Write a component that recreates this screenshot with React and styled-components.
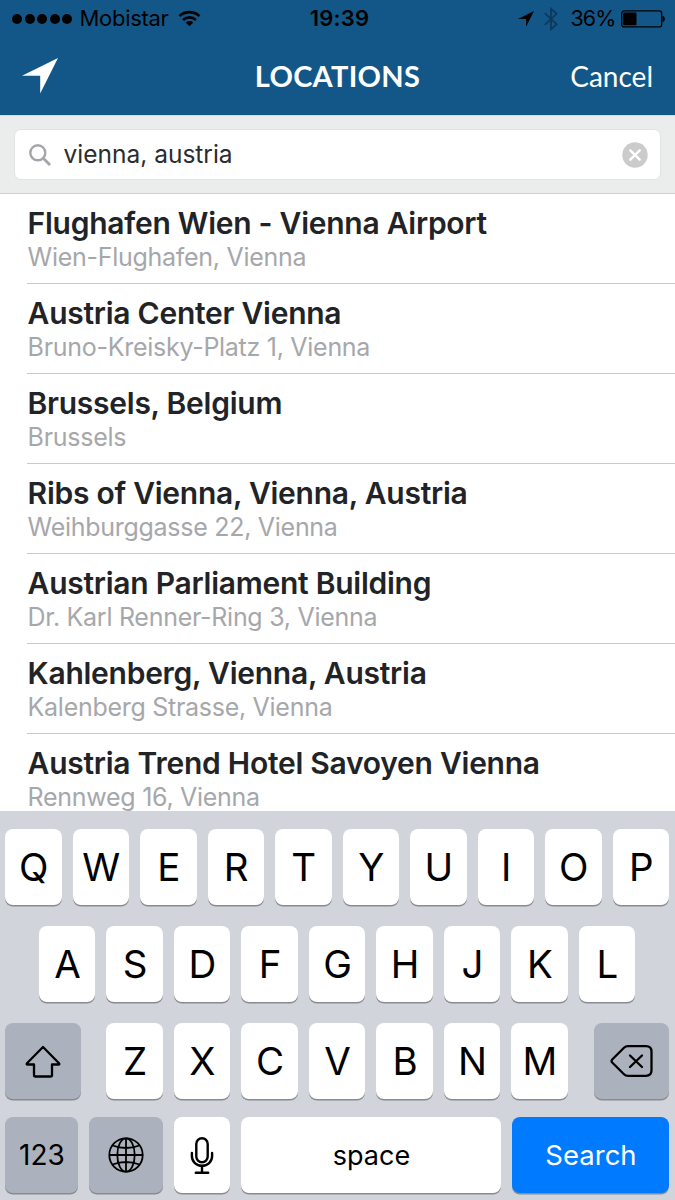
import React from "react";
import styled, { createGlobalStyle } from "styled-components";

const GlobalStyle = createGlobalStyle`
  * {
    box-sizing: border-box;
  }

  body {
    margin: 0;
    background: #fff;
    font-family: Inter, "Liberation Sans", sans-serif;
  }
`;

const Screen = styled.div`
  width: 675px;
  height: 1200px;
  display: flex;
  flex-direction: column;
  overflow: hidden;
`;

const Header = styled.header`
  flex: none;
  height: 115px;
  background: #135788;
`;

const StatusBar = styled.div`
  height: 37px;
  padding: 0 10px 0 12px;
  display: grid;
  grid-template-columns: 1fr auto 1fr;
  align-items: center;
  font-size: 22px;
  line-height: 37px;
  color: #000;
`;

const StatusGroup = styled.div`
  height: 37px;
  display: flex;
  align-items: center;
  justify-content: ${({ $end }) => ($end ? "flex-end" : "flex-start")};
`;

const Signal = styled.div`
  display: flex;
  gap: 2.5px;
  margin-right: 7.5px;

  i {
    width: 10px;
    height: 10px;
    border-radius: 50%;
    background: #000;
  }
`;

const Carrier = styled.span`
  letter-spacing: -0.3px;
  margin-right: 9px;
`;

const Clock = styled.span`
  padding-left: 2px;
  font-weight: 600;
  letter-spacing: 0.2px;
`;

const Percent = styled.span`
  font-size: 21.5px;
  letter-spacing: -0.9px;
  margin: 0 5.5px 0 12px;
`;

const NavBar = styled.div`
  height: 78px;
  padding: 0 22px;
  display: grid;
  grid-template-columns: 1fr auto 1fr;
  align-items: center;
  color: #fff;
  font-family: Lato, "Open Sans", sans-serif;
`;

const NavTitle = styled.h1`
  margin: 0;
  font-size: 29px;
  line-height: 76px;
  font-weight: 700;
  letter-spacing: 0.3px;
`;

const Cancel = styled.button`
  justify-self: end;
  padding: 0;
  border: 0;
  background: none;
  color: #fff;
  font: 400 28px/76px Lato, "Open Sans", sans-serif;
`;

const SearchBar = styled.div`
  flex: none;
  height: 79px;
  padding: 13px 14px;
  background: #ebeded;
  border-top: 1px solid #d3dde5;
  border-bottom: 1px solid #cfd1d1;
`;

const SearchField = styled.div`
  height: 51px;
  padding: 0 12px 0 14px;
  display: flex;
  align-items: center;
  background: #fff;
  border: 1px solid #e2e4e4;
  border-radius: 7px;
`;

const Query = styled.span`
  flex: 1;
  margin-left: 12.5px;
  font-size: 24.5px;
  line-height: 47px;
  color: #2b2c30;
`;

const Results = styled.ul`
  flex: none;
  height: 617px;
  margin: 0;
  padding: 0 0 0 27px;
  overflow: hidden;
  list-style: none;
`;

const Result = styled.li`
  height: 90px;
  padding: 11px 0 0 0.6px;
  border-bottom: 1px solid #c9cacc;
  white-space: nowrap;
`;

const Place = styled.div`
  font-size: 30px;
  line-height: 37px;
  font-weight: 600;
  letter-spacing: -0.26px;
  color: #222327;
`;

const Address = styled.div`
  font-size: 25px;
  line-height: 31px;
  letter-spacing: -0.28px;
  color: #a6a7ab;
`;

const Keyboard = styled.div`
  flex: none;
  height: 389px;
  padding: 18px 6px 0 5px;
  display: flex;
  flex-direction: column;
  gap: 21.5px;
  background: #d1d4da;
`;

const KeyRow = styled.div`
  display: flex;
  justify-content: ${({ $spread }) => ($spread ? "space-between" : "center")};
  gap: 11px;
  margin-top: ${({ $lift }) => $lift || 0}px;
`;

const Letters = styled.div`
  display: flex;
  gap: 11px;
`;

const Key = styled.div`
  flex: none;
  width: ${({ $width }) => $width || 56.5}px;
  height: 75.5px;
  padding: ${({ $tone }) => ($tone === "blue" ? 0 : 1)}px 0 0 1px;
  display: flex;
  align-items: center;
  justify-content: center;
  border-radius: 8px;
  background: ${({ $tone }) =>
    ({ dark: "#abb2bd", blue: "#007aff" })[$tone] || "#fff"};
  color: ${({ $tone }) => ($tone === "blue" ? "#fff" : "#000")};
  box-shadow: 0 1.5px 0 #888b90;
  font-size: ${({ $size }) => $size || 38.5}px;
  font-weight: 400;
`;

const places = [
  ["Flughafen Wien - Vienna Airport", "Wien-Flughafen, Vienna"],
  ["Austria Center Vienna", "Bruno-Kreisky-Platz 1, Vienna"],
  ["Brussels, Belgium", "Brussels"],
  ["Ribs of Vienna, Vienna, Austria", "Weihburggasse 22, Vienna"],
  ["Austrian Parliament Building", "Dr. Karl Renner-Ring 3, Vienna"],
  ["Kahlenberg, Vienna, Austria", "Kalenberg Strasse, Vienna"],
  ["Austria Trend Hotel Savoyen Vienna", "Rennweg 16, Vienna"],
];

const WifiIcon = () => (
  <svg width="23" height="17" viewBox="0 0 22 17" fill="none" stroke="#000" strokeWidth="2.6">
    <path d="M1 6.2a14.2 14.2 0 0 1 20 0" />
    <path d="M4.6 10a9.2 9.2 0 0 1 12.8 0" />
    <path d="M11 16.2 7.2 12.4a5.6 5.6 0 0 1 7.6 0z" fill="#000" stroke="none" />
  </svg>
);

const ArrowIcon = ({ size, color }) => (
  <svg width={size} height={size} viewBox="0 0 36 36" fill={color}>
    <path d="M36 0 18.2 35.5V17.8H0z" />
  </svg>
);

const BluetoothSvg = styled.svg`
  margin-left: 10px;
`;

const BluetoothIcon = () => (
  <BluetoothSvg width="14" height="24" viewBox="0 0 14 24" fill="none" stroke="#0c395b" strokeWidth="1.8">
    <path d="M.8 6.2 12.6 17.2 7 22.3V1.7l5.6 5.1L.8 17.8" />
  </BluetoothSvg>
);

const BatteryIcon = () => (
  <svg width="44" height="18" viewBox="0 0 44 18">
    <rect x=".7" y=".9" width="40" height="16" rx="2.5" fill="none" stroke="#000" strokeWidth="1.3" />
    <rect x="2.2" y="2.5" width="13.3" height="12.8" rx="1" />
    <path d="M41.5 5.7c1.5.3 2.3 1.5 2.3 3.2s-.8 2.900-2.300 3.200z" />
  </svg>
);

const SearchIcon = () => (
  <svg width="22" height="22" viewBox="0 0 22 22" fill="none" stroke="#a4a5aa" strokeWidth="2.4">
    <circle cx="8.8" cy="8.8" r="7.5" />
    <path d="m14 14 7 7" strokeWidth="2.8" />
  </svg>
);

const ClearIcon = () => (
  <svg width="26" height="26" viewBox="0 0 26 26">
    <circle cx="13" cy="13" r="12.7" fill="#cbcbcb" />
    <path d="m8.3 8.3 9.4 9.4m0-9.4-9.4 9.4" stroke="#fff" strokeWidth="2.4" strokeLinecap="round" />
  </svg>
);

const ShiftIcon = () => (
  <svg width="36" height="33" viewBox="0 0 36 33" fill="none" stroke="#000" strokeWidth="2.3" strokeLinejoin="round">
    <path d="M18 2 34 18.3q1 1.2-.6 1.2H27V30q0 1.5-1.5 1.5h-15Q9 31.5 9 30V19.5H2.6q-1.6 0-.6-1.2z" />
  </svg>
);

const BackspaceIcon = () => (
  <svg width="43" height="32" viewBox="0 0 43 32" fill="none" stroke="#000" strokeWidth="2.3" strokeLinejoin="round" strokeLinecap="round">
    <path d="M14 2.8Q15.6 1.2 18 1.2h18q5.5 0 5.5 5.5v18.6q0 5.5-5.5 5.5H18q-2.4 0-4-1.6L2.2 17.5q-1.3-1.5 0-3z" />
    <path d="m20 10.5 12 11.5m0-11.5L20 22" />
  </svg>
);

const GlobeIcon = () => (
  <svg width="36" height="36" viewBox="0 0 36 36" fill="none" stroke="#000" strokeWidth="1.8">
    <circle cx="18" cy="18" r="16.7" />
    <ellipse cx="18" cy="18" rx="8.7" ry="16.7" />
    <path d="M18 1v34M1 18h34M4.500 8.500q13.500 5 27 0M4.500 27.500q13.500-5 27 0" />
  </svg>
);

const MicIcon = () => (
  <svg width="24" height="38" viewBox="0 0 24 38" fill="none" stroke="#000" strokeWidth="2.4" strokeLinecap="round">
    <rect x="6.3" y="2.3" width="11.4" height="24" rx="5.7" />
    <path d="M1.900 17v3.200c0 5.400 4.500 9.600 10.100 9.600s10.100-4.200 10.100-9.600V17M12 30v6.500M5.800 36.700h12.400" />
  </svg>
);

const LetterKeys = ({ letters }) => (
  <Letters>
    {letters.split("").map((letter) => (
      <Key key={letter}>{letter}</Key>
    ))}
  </Letters>
);

const App = () => {
  return (
    <Screen>
      <GlobalStyle />
      <Header>
        <StatusBar>
          <StatusGroup>
            <Signal>
              <i /><i /><i /><i /><i />
            </Signal>
            <Carrier>Mobistar</Carrier>
            <WifiIcon />
          </StatusGroup>
          <Clock>19:39</Clock>
          <StatusGroup $end>
            <ArrowIcon size={16} color="#000" />
            <BluetoothIcon />
            <Percent>36%</Percent>
            <BatteryIcon />
          </StatusGroup>
        </StatusBar>
        <NavBar>
          <ArrowIcon size={36} color="#fff" />
          <NavTitle>LOCATIONS</NavTitle>
          <Cancel>Cancel</Cancel>
        </NavBar>
      </Header>
      <SearchBar>
        <SearchField>
          <SearchIcon />
          <Query>vienna, austria</Query>
          <ClearIcon />
        </SearchField>
      </SearchBar>
      <Results>
        {places.map(([name, address]) => (
          <Result key={name}>
            <Place>{name}</Place>
            <Address>{address}</Address>
          </Result>
        ))}
      </Results>
      <Keyboard>
        <KeyRow>
          <LetterKeys letters="QWERTYUIOP" />
        </KeyRow>
        <KeyRow>
          <LetterKeys letters="ASDFGHJKL" />
        </KeyRow>
        <KeyRow $spread>
          <Key $width={75.5} $tone="dark">
            <ShiftIcon />
          </Key>
          <LetterKeys letters="ZXCVBNM" />
          <Key $width={75.5} $tone="dark">
            <BackspaceIcon />
          </Key>
        </KeyRow>
        <KeyRow $spread $lift={-3}>
          <Key $width={73} $tone="dark" $size={28}>123</Key>
          <Key $width={73.5} $tone="dark">
            <GlobeIcon />
          </Key>
          <Key>
            <MicIcon />
          </Key>
          <Key $width={260} $size={27}>space</Key>
          <Key $width={157} $tone="blue" $size={27.5}>Search</Key>
        </KeyRow>
      </Keyboard>
    </Screen>
  );
};

export default App;
